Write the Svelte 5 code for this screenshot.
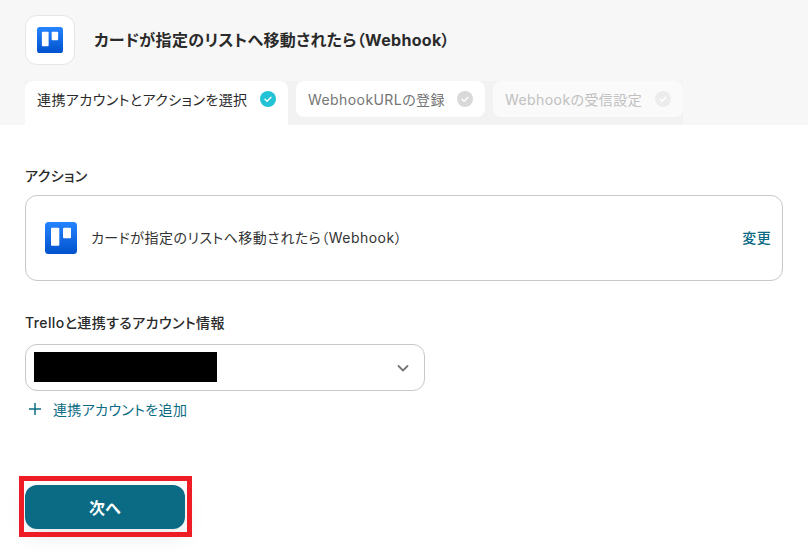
<script>
  const tabs = [
    { label: "連携アカウントとアクションを選択", state: "active" },
    { label: "WebhookURLの登録", state: "todo" },
    { label: "Webhookの受信設定", state: "off" }
  ];
</script>

{#snippet trello(size)}
  <svg width={size} height={size} viewBox="0 0 32 32" aria-hidden="true">
    <defs>
      <linearGradient id="tr{size}" x1="0" y1="0" x2="0" y2="1">
        <stop offset="0" stop-color="#2684ff" />
        <stop offset="1" stop-color="#0052cc" />
      </linearGradient>
    </defs>
    <rect width="32" height="32" rx="3.5" fill="url(#tr{size})" />
    <rect x="6" y="5.700" width="8.300" height="18" rx="1" fill="#fff" />
    <rect x="18" y="5.700" width="8" height="10.500" rx="1" fill="#fff" />
  </svg>
{/snippet}

<div class="page">
  <header class="head">
    <div class="title-row">
      <div class="logo-box">{@render trello(26)}</div>
      <h1>カードが指定のリストへ移動されたら（Webhook）</h1>
    </div>
    <div class="tabs">
      {#each tabs as t}
        <div class="tab {t.state}">
          <span>{t.label}</span>
          <svg class="check" width="16" height="16" viewBox="0 0 16 16" aria-hidden="true">
            <circle cx="8" cy="8" r="8" class="disc" />
            <path d="M5 8.2l2.1 2.1L11 6.3" fill="none" stroke="#fff" stroke-width="1.3" stroke-linecap="round" stroke-linejoin="round" />
          </svg>
        </div>
      {/each}
    </div>
  </header>

  <main class="body">
    <div class="label first">アクション</div>
    <div class="action-card">
      {@render trello(32)}
      <span class="action-name">カードが指定のリストへ移動されたら（Webhook）</span>
      <span class="change">変更</span>
    </div>

    <div class="label second">Trelloと連携するアカウント情報</div>
    <div class="select">
      <div class="redacted"></div>
      <svg width="14" height="14" viewBox="0 0 14 14" aria-hidden="true">
        <path d="M2.5 5l4.5 4.5L11.500 5" fill="none" stroke="#777" stroke-width="1.8" stroke-linecap="round" stroke-linejoin="round" />
      </svg>
    </div>
    <div class="add">
      <svg width="14" height="14" viewBox="0 0 14 14" aria-hidden="true">
        <path d="M7 1v12M1 7h12" stroke="#0b6b84" stroke-width="1.5" fill="none" />
      </svg>
      <span>連携アカウントを追加</span>
    </div>

    <div class="next-wrap">
      <button class="next" type="button">次へ</button>
      <div class="highlight"></div>
    </div>
  </main>
</div>

<style>
  :global(body) { margin: 0; background: #fff; }
  .page { width: 808px; height: 560px; overflow: hidden; font-family: Inter, "Noto Sans CJK JP", sans-serif; font-feature-settings: "palt"; letter-spacing: 0.35px; color: #2a2a2a; }
  .head { background: #f7f7f7; height: 125px; padding: 15px 0 0 25px; box-sizing: border-box; }
  .title-row { display: flex; align-items: center; gap: 19px; height: 50px; }
  .logo-box { width: 50px; height: 50px; box-sizing: border-box; background: #fff; border: 1px solid #e6e6e6; border-radius: 12px; display: flex; align-items: center; justify-content: center; }
  h1 { margin: 0 0 2px; font-size: 16px; font-weight: 700; letter-spacing: 0.32px; color: #2a2a2a; }
  .tabs { display: flex; align-items: flex-start; gap: 8px; width: fit-content; height: 44px; margin-top: 16px; background: #f2f2f2; }
  .tab { display: flex; align-items: center; justify-content: space-between; height: 36px; padding: 0 12px; box-sizing: border-box; background: #fff; border-radius: 8px; font-size: 14px; letter-spacing: 0.42px; color: #757575; white-space: nowrap; }
  .tab.active { width: 263px; height: 44px; padding-bottom: 8px; border-radius: 8px 8px 0 0; color: #2a2a2a; }
  .tab:nth-child(2) { width: 189px; }
  .tab.off { width: 190px; background: #fafafa; color: #c0c0c0; }
  .disc { fill: #d9d9d9; }
  .active .disc { fill: #22c3d6; }
  .off .disc { fill: #ececec; }
  .body { position: relative; padding: 0 25px; }
  .label { font-size: 14px; font-weight: 500; letter-spacing: 0.4px; color: #2a2a2a; line-height: 20px; }
  .label.first { margin-top: 41px; }
  .label.second { margin-top: 32px; }
  .action-card { display: flex; align-items: center; width: 758px; height: 86px; margin-top: 9px; padding: 0 11px 0 19px; box-sizing: border-box; border: 1px solid #c8c8c8; border-radius: 12px; }
  .action-name { margin: 0 0 2px 14px; font-size: 14px; letter-spacing: 0.48px; flex: 1; color: #333; }
  .change { font-size: 14px; color: #0b6b84; font-weight: 500; margin-bottom: 2px; }
  .select { display: flex; align-items: center; justify-content: space-between; width: 400px; height: 47px; margin-top: 11px; padding: 0 14px 0 8px; box-sizing: border-box; border: 1px solid #c8c8c8; border-radius: 12px; }
  .redacted { width: 183px; height: 30px; margin-bottom: 1px; background: #000; }
  .add { display: flex; align-items: center; gap: 11px; margin: 8px 0 0 3px; height: 20px; font-size: 14px; color: #0b6b84; }
  .next-wrap { position: relative; margin-top: 66px; width: 160px; }
  .next { display: block; width: 160px; height: 44px; border: none; border-radius: 12px; background: #0b6b84; color: #fff; font: 700 16px Inter, "Noto Sans CJK JP", sans-serif; box-shadow: 0 6px 20px rgba(40, 60, 90, 0.13); }
  .highlight { position: absolute; left: -6px; top: -9px; width: 173px; height: 61px; box-sizing: border-box; border: 5px solid #ee1c25; }
</style>
